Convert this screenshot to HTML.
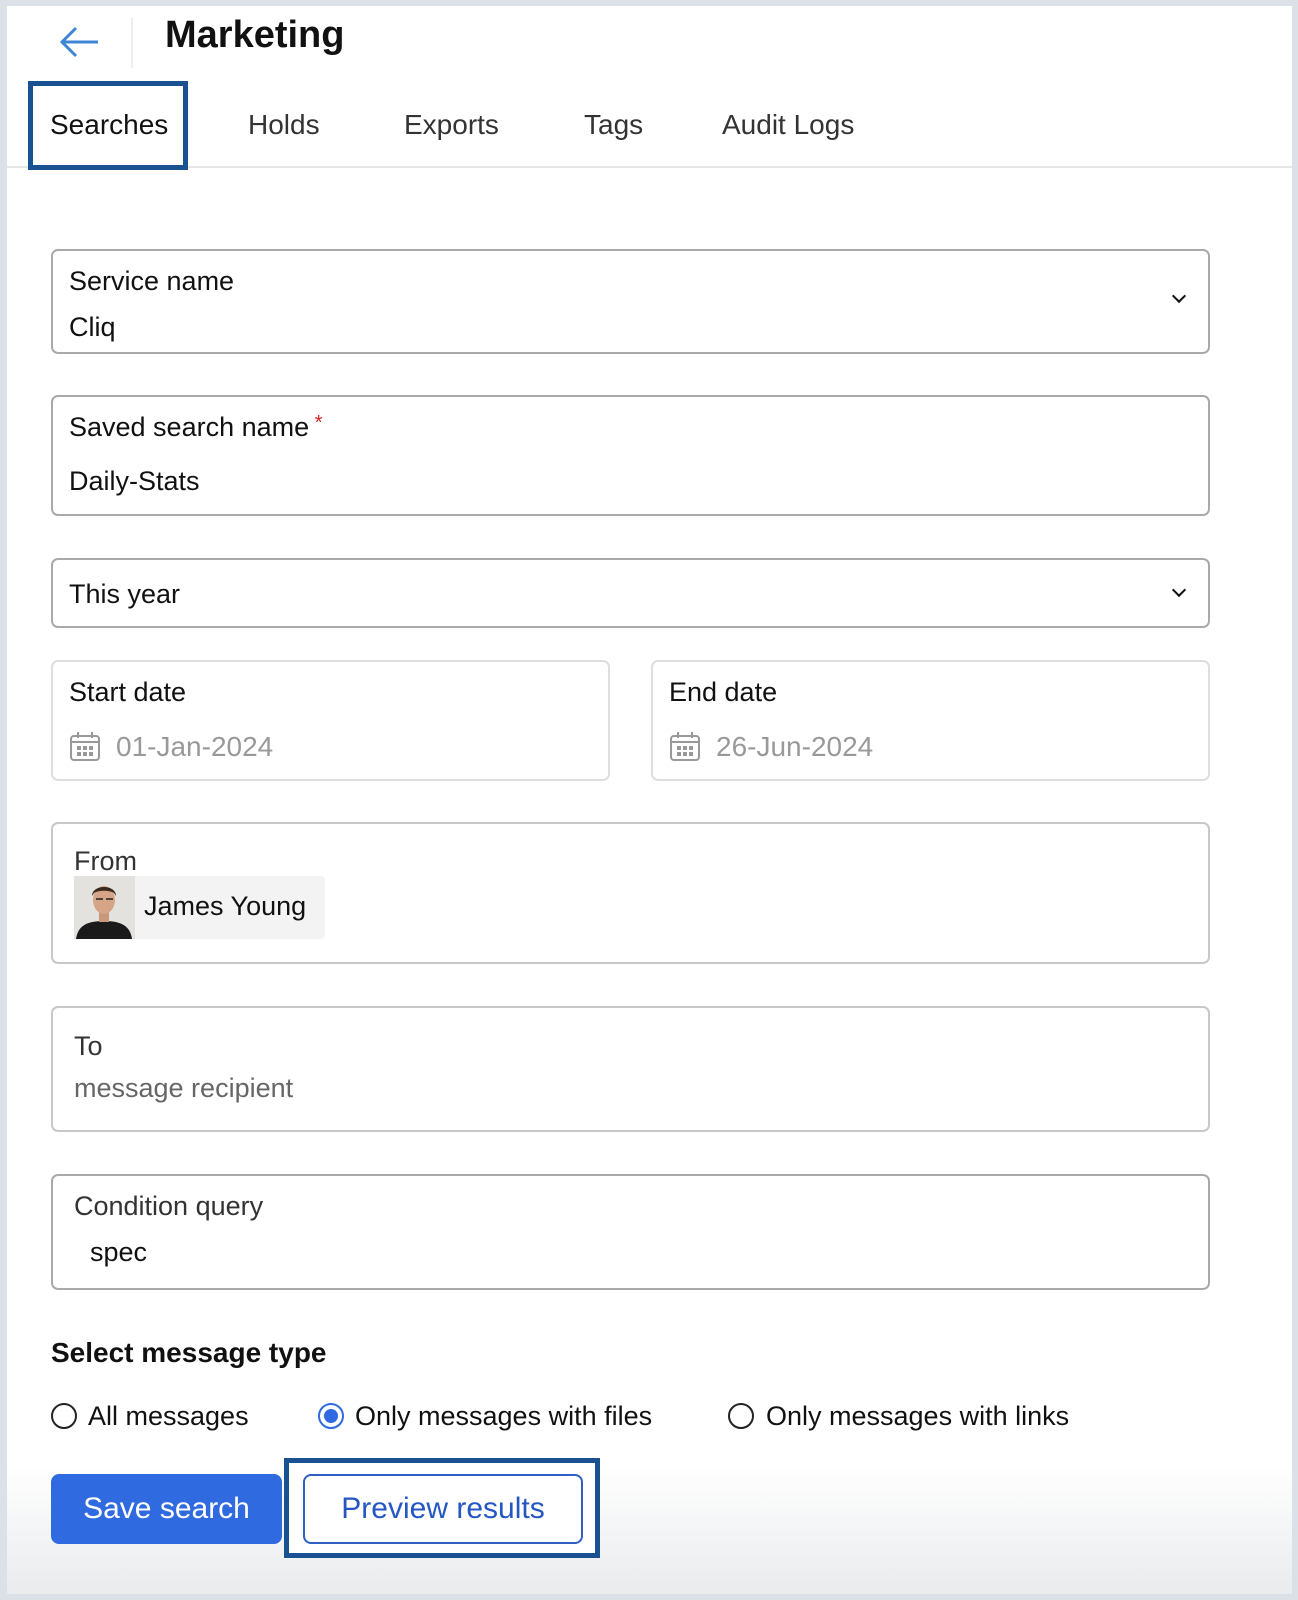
<!DOCTYPE html>
<html><head><meta charset="utf-8"><style>
*{box-sizing:border-box;margin:0;padding:0}
body{width:1298px;height:1600px;background:#dbe1e6;font-family:"Liberation Sans",sans-serif;color:#111;position:relative;overflow:hidden}
.panel{position:absolute;left:7px;top:6px;width:1285px;height:1588px;background:linear-gradient(#fff 0,#fff 1460px,#e9ebed 1588px)}
.a{position:absolute}
.box{position:absolute;left:51px;width:1159px;border:2px solid #a9a9a9;border-radius:7px;background:#fff}
.lbl{position:absolute;font-size:26px;white-space:nowrap}
.chev{position:absolute;right:24px;width:10px;height:10px;border-right:2px solid #111;border-bottom:2px solid #111;transform:rotate(45deg)}
.tab{position:absolute;top:109px;font-size:28px;color:#333}
.radio{position:absolute;top:1403px;width:26px;height:26px;border:2px solid #222;border-radius:50%}
</style></head><body>
<div class="panel"></div>
<svg class="a" style="left:58px;top:26px" width="42" height="32" viewBox="0 0 42 32"><path d="M40 16H4M18 2L4 16l14 14" fill="none" stroke="#3d86d6" stroke-width="3"/></svg>
<div class="a" style="left:131px;top:18px;width:2px;height:50px;background:#eee"></div>
<div class="a" style="left:165px;top:14px;font-size:38px;font-weight:bold">Marketing</div>
<div class="a" style="left:7px;top:166px;width:1285px;height:2px;background:#e6e6e6"></div>
<div class="a" style="left:28px;top:81px;width:160px;height:89px;border:5px solid #1a5190;background:#fff"></div>
<div class="tab" style="left:50px;color:#111">Searches</div>
<div class="tab" style="left:248px">Holds</div>
<div class="tab" style="left:404px">Exports</div>
<div class="tab" style="left:584px">Tags</div>
<div class="tab" style="left:722px">Audit Logs</div>

<div class="box" style="top:249px;height:105px"><div class="lbl" style="left:16px;top:15px;font-size:27px">Service name</div><div class="lbl" style="left:16px;top:61px;font-size:27px">Cliq</div><div class="chev" style="top:40px"></div></div>
<div class="box" style="top:395px;height:121px"><div class="lbl" style="left:16px;top:15px;font-size:27px">Saved search name<span style="color:#d22;font-size:20px;vertical-align:top">&nbsp;*</span></div><div class="lbl" style="left:16px;top:69px;font-size:27px">Daily-Stats</div></div>
<div class="box" style="top:558px;height:70px"><div class="lbl" style="left:16px;top:19px;font-size:27px">This year</div><div class="chev" style="top:25px"></div></div>

<div class="box" style="top:660px;height:121px;width:559px;border-color:#dedede"><div class="lbl" style="left:16px;top:15px;font-size:27px">Start date</div>
<svg class="a" style="left:16px;top:68px" width="34" height="32" viewBox="0 0 34 32"><rect x="2" y="6" width="28" height="24" rx="3" fill="none" stroke="#999" stroke-width="2"/><path d="M9 2v6M23 2v6M2 12h28" stroke="#999" stroke-width="2"/><g fill="#999"><rect x="8" y="16" width="4" height="4"/><rect x="14" y="16" width="4" height="4"/><rect x="20" y="16" width="4" height="4"/><rect x="8" y="22" width="4" height="4"/><rect x="14" y="22" width="4" height="4"/><rect x="20" y="22" width="4" height="4"/></g></svg>
<div class="lbl" style="left:63px;top:69px;color:#999;font-size:28px">01-Jan-2024</div></div>
<div class="box" style="top:660px;height:121px;left:651px;width:559px;border-color:#dedede"><div class="lbl" style="left:16px;top:15px;font-size:27px">End date</div>
<svg class="a" style="left:16px;top:68px" width="34" height="32" viewBox="0 0 34 32"><rect x="2" y="6" width="28" height="24" rx="3" fill="none" stroke="#999" stroke-width="2"/><path d="M9 2v6M23 2v6M2 12h28" stroke="#999" stroke-width="2"/><g fill="#999"><rect x="8" y="16" width="4" height="4"/><rect x="14" y="16" width="4" height="4"/><rect x="20" y="16" width="4" height="4"/><rect x="8" y="22" width="4" height="4"/><rect x="14" y="22" width="4" height="4"/><rect x="20" y="22" width="4" height="4"/></g></svg>
<div class="lbl" style="left:63px;top:69px;color:#999;font-size:28px">26-Jun-2024</div></div>

<div class="box" style="top:822px;height:142px;border-color:#c8c8c8"><div class="lbl" style="left:21px;top:22px;color:#333;font-size:27px">From</div>
<div class="a" style="left:21px;top:52px;width:251px;height:63px;background:#f3f3f3;border-radius:4px"></div>
<svg class="a" style="left:21px;top:52px" width="61" height="63" viewBox="0 0 61 63"><rect width="61" height="63" fill="#e4e2de"/><path d="M2 63c2-14 12-18 28-18s26 4 28 18z" fill="#1a1a1a"/><rect x="25" y="34" width="10" height="12" fill="#c9977a"/><ellipse cx="30" cy="24" rx="11" ry="14" fill="#d6a587"/><path d="M18 20c0-12 24-12 24 0l-2-3c-4-3-16-3-20 0z" fill="#3a2a20"/><path d="M22 23h7M32 23h7" stroke="#222" stroke-width="1.5"/></svg>
<div class="lbl" style="left:91px;top:67px;font-size:27px">James Young</div></div>

<div class="box" style="top:1006px;height:126px;border-color:#c8c8c8"><div class="lbl" style="left:21px;top:23px;color:#333;font-size:27px">To</div><div class="lbl" style="left:21px;top:65px;color:#666;font-size:27px">message recipient</div></div>
<div class="box" style="top:1174px;height:116px"><div class="lbl" style="left:21px;top:15px;color:#333;font-size:27px">Condition query</div><div class="lbl" style="left:37px;top:61px;font-size:27px">spec</div></div>

<div class="a" style="left:51px;top:1337px;font-size:28px;font-weight:bold">Select message type</div>
<div class="radio" style="left:51px"></div><div class="lbl" style="left:88px;top:1401px;font-size:27px">All messages</div>
<div class="radio" style="left:318px;border-color:#2f6ae0"><div class="a" style="left:4px;top:4px;width:14px;height:14px;border-radius:50%;background:#2f6ae0"></div></div><div class="lbl" style="left:355px;top:1401px;font-size:27px">Only messages with files</div>
<div class="radio" style="left:728px"></div><div class="lbl" style="left:766px;top:1401px;font-size:27px">Only messages with links</div>

<div class="a" style="left:51px;top:1474px;width:231px;height:70px;background:#2f6ae0;border-radius:8px;color:#fff;font-size:30px;text-align:center;line-height:70px">Save search</div>
<div class="a" style="left:284px;top:1458px;width:316px;height:100px;border:5px solid #1a5190;background:#fff"></div>
<div class="a" style="left:303px;top:1474px;width:280px;height:70px;border:2px solid #2f5fc0;border-radius:8px;color:#2456c4;font-size:30px;text-align:center;line-height:66px">Preview results</div>
</body></html>
